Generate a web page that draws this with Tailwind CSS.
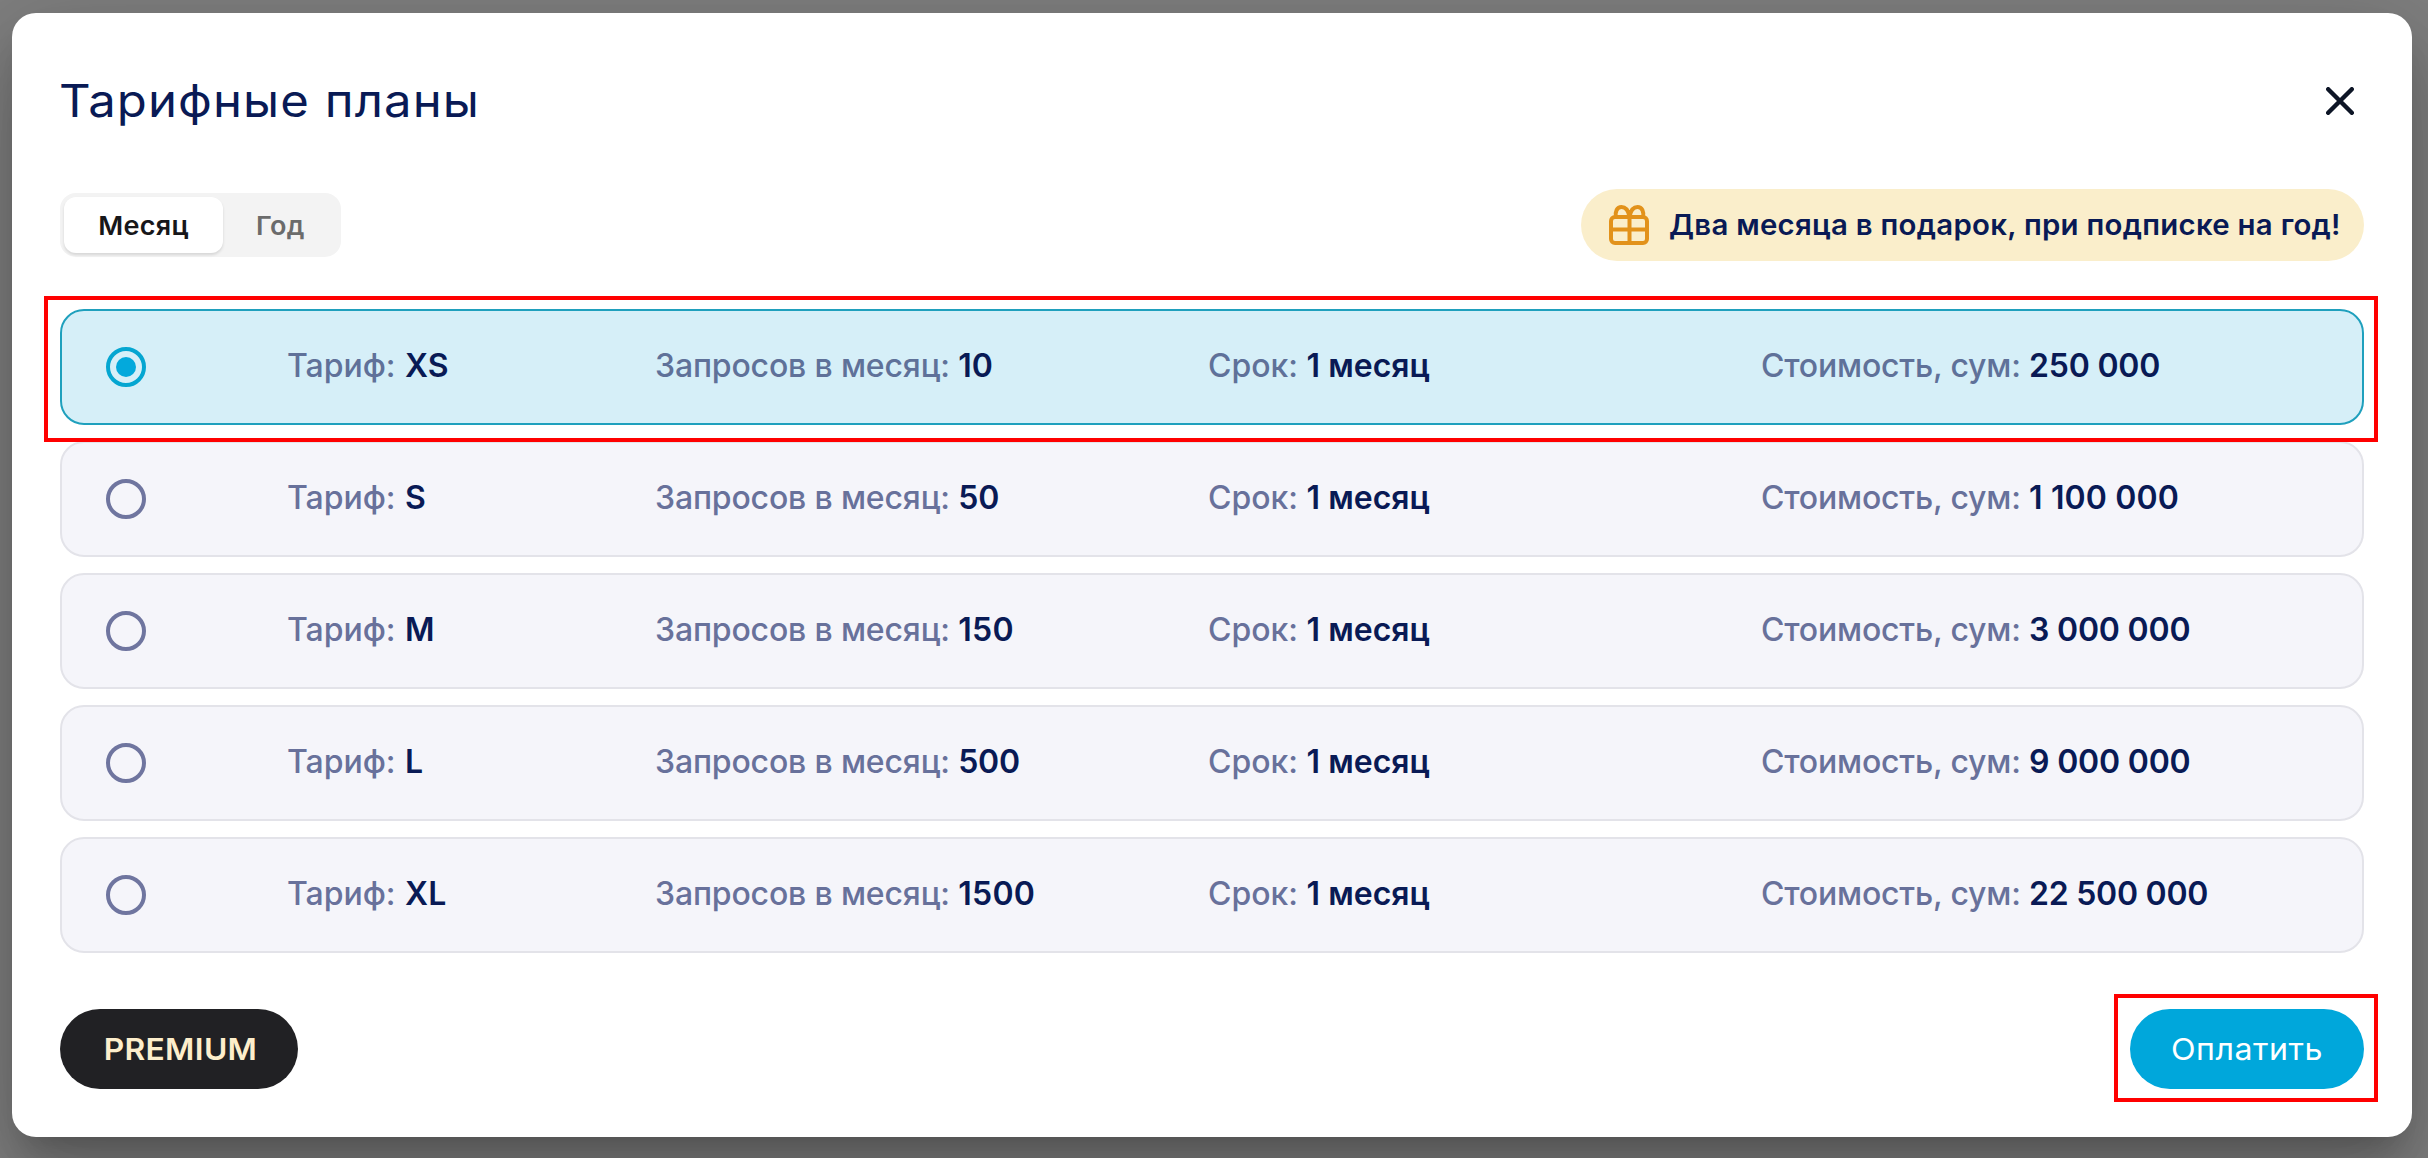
<!DOCTYPE html>
<html lang="ru">
<head>
  <meta charset="UTF-8" />
  <meta name="viewport" content="width=device-width, initial-scale=1" />
  <title>Тарифные планы</title>
  <script src="https://cdn.jsdelivr.net/npm/@tailwindcss/browser@4"></script>
</head>
<body class="bg-[#7f7f7f] font-['Inter',sans-serif] text-[#091a55] w-[2428px] h-[1158px] overflow-hidden pl-3 pt-[13px]">

<div role="dialog" class="w-[2400px] h-[1124px] bg-white rounded-3xl p-12 flex flex-col shadow-[0_22px_30px_-14px_rgba(0,0,0,0.2),0_48px_76px_6px_rgba(0,0,0,0.14),0_18px_92px_16px_rgba(0,0,0,0.12)]">

  <header class="h-20 flex items-center justify-between">
    <h1 class="text-[45px] leading-none font-normal tracking-[1px] -ml-px pb-px origin-left scale-x-[1.09]">Тарифные планы</h1>
    <button class="w-12 h-12 flex items-center justify-center" aria-label="Закрыть">
      <svg viewBox="0 0 28 28" class="w-7 h-7 text-[#0d1526]" fill="none" stroke="currentColor" stroke-width="4.400" stroke-linecap="round"><path d="M2.200 2.200 25.800 25.800M25.800 2.200 2.200 25.800"/></svg>
    </button>
  </header>

  <div class="mt-12 h-[72px] flex items-center justify-between">
    <div class="h-16 w-[281px] p-1 flex rounded-2xl bg-[#f3f3f3] text-[26px] tracking-[0.3px]">
      <button class="w-[159px] rounded-xl bg-white font-semibold text-[#17171a] shadow-[0_2px_3px_rgba(0,0,0,0.12)]"><span class="inline-block scale-x-[1.04]">Месяц</span></button>
      <button class="flex-1 font-semibold text-[#6b6b6b]"><span class="inline-block scale-x-[1.04]">Год</span></button>
    </div>

    <div class="h-[72px] w-[783px] pl-7 rounded-full bg-[#faeecb] flex items-center gap-5">
      <svg viewBox="0 0 40 40" class="w-10 h-10 shrink-0 text-[#e2921b]" fill="none" stroke="currentColor" stroke-width="4" aria-hidden="true">
        <rect x="2" y="12" width="36" height="26" rx="4"/>
        <path d="M2 24.500H38M20.500 10V38"/>
        <path d="M7 12.500C5.800 6.500 8 2 12.500 2 17 2 19.500 6.500 20.500 11.500 21.500 6.500 24 2 28.500 2 33 2 35.200 6.500 34 12.500"/>
      </svg>
      <span class="text-[28px] font-semibold tracking-[0.25px] whitespace-nowrap origin-left scale-x-[1.05]">Два месяца в подарок, при подписке на год!</span>
    </div>
  </div>

  <section class="mt-12 flex flex-col gap-4 text-[32px] leading-10 font-medium text-[#68719b] whitespace-nowrap">
    <div class="relative">
      <div class="h-[116px] grid grid-cols-[181px_368px_553px_553px_1fr] items-center pl-11 rounded-3xl border-2 border-[#1fa0bd] bg-[#d6eff8] text-[#5f7199]">
        <span class="w-10 h-10 rounded-full border-4 border-[#05a6d1] flex items-center justify-center"><span class="w-5 h-5 rounded-full bg-[#03a9dc]"></span></span>
        <p class="pb-0.5">Тариф: <b class="ml-px font-semibold text-[#091a55]">XS</b></p>
        <p class="pb-0.5 tracking-[-0.16px]">Запросов в месяц: <b class="font-semibold text-[#091a55] tracking-normal">10</b></p>
        <p class="pb-0.5">Срок: <b class="font-semibold text-[#091a55]">1 месяц</b></p>
        <p class="pb-0.5 tracking-[-0.2px]">Стоимость, сум: <b class="font-semibold text-[#091a55]">250 000</b></p>
      </div>
      <div class="absolute z-10 -left-4 -right-3.5 -top-[13px] -bottom-[17px] border-4 border-[#ff0000] pointer-events-none"></div>
    </div>

    <div class="h-[116px] grid grid-cols-[181px_368px_553px_553px_1fr] items-center pl-11 rounded-3xl border-2 border-[#e3e3e9] bg-[#f5f5fa]">
      <span class="w-10 h-10 rounded-full border-4 border-[#6f759f]"></span>
      <p class="pb-0.5">Тариф: <b class="ml-px font-semibold text-[#091a55]">S</b></p>
      <p class="pb-0.5 tracking-[-0.16px]">Запросов в месяц: <b class="font-semibold text-[#091a55] tracking-normal">50</b></p>
      <p class="pb-0.5">Срок: <b class="font-semibold text-[#091a55]">1 месяц</b></p>
      <p class="pb-0.5 tracking-[-0.2px]">Стоимость, сум: <b class="font-semibold text-[#091a55] tracking-[0.15px]">1 100 000</b></p>
    </div>

    <div class="h-[116px] grid grid-cols-[181px_368px_553px_553px_1fr] items-center pl-11 rounded-3xl border-2 border-[#e3e3e9] bg-[#f5f5fa]">
      <span class="w-10 h-10 rounded-full border-4 border-[#6f759f]"></span>
      <p class="pb-0.5">Тариф: <b class="ml-px font-semibold text-[#091a55]">M</b></p>
      <p class="pb-0.5 tracking-[-0.16px]">Запросов в месяц: <b class="font-semibold text-[#091a55] tracking-[0.3px]">150</b></p>
      <p class="pb-0.5">Срок: <b class="font-semibold text-[#091a55]">1 месяц</b></p>
      <p class="pb-0.5 tracking-[-0.2px]">Стоимость, сум: <b class="font-semibold text-[#091a55]">3 000 000</b></p>
    </div>

    <div class="h-[116px] grid grid-cols-[181px_368px_553px_553px_1fr] items-center pl-11 rounded-3xl border-2 border-[#e3e3e9] bg-[#f5f5fa]">
      <span class="w-10 h-10 rounded-full border-4 border-[#6f759f]"></span>
      <p class="pb-0.5">Тариф: <b class="ml-px font-semibold text-[#091a55]">L</b></p>
      <p class="pb-0.5 tracking-[-0.16px]">Запросов в месяц: <b class="font-semibold text-[#091a55]">500</b></p>
      <p class="pb-0.5">Срок: <b class="font-semibold text-[#091a55]">1 месяц</b></p>
      <p class="pb-0.5 tracking-[-0.2px]">Стоимость, сум: <b class="font-semibold text-[#091a55]">9 000 000</b></p>
    </div>

    <div class="h-[116px] grid grid-cols-[181px_368px_553px_553px_1fr] items-center pl-11 rounded-3xl border-2 border-[#e3e3e9] bg-[#f5f5fa]">
      <span class="w-10 h-10 rounded-full border-4 border-[#6f759f]"></span>
      <p class="pb-0.5">Тариф: <b class="ml-px font-semibold text-[#091a55]">XL</b></p>
      <p class="pb-0.5 tracking-[-0.16px]">Запросов в месяц: <b class="font-semibold text-[#091a55] tracking-[0.3px]">1500</b></p>
      <p class="pb-0.5">Срок: <b class="font-semibold text-[#091a55]">1 месяц</b></p>
      <p class="pb-0.5 tracking-[-0.2px]">Стоимость, сум: <b class="font-semibold text-[#091a55] tracking-[-0.25px]">22 500 000</b></p>
    </div>
  </section>

  <footer class="mt-14 flex justify-between text-[30px]">
    <button class="w-[238px] h-20 pl-0.5 rounded-full bg-[#212124] text-[#fdeecb] font-semibold tracking-[0.3px]"><span class="inline-block scale-x-[1.06]">PREMIUM</span></button>
    <div class="relative">
      <button class="w-[234px] h-20 rounded-full bg-[#00a7db] text-white font-normal tracking-[0.5px]"><span class="inline-block scale-x-[1.07]">Оплатить</span></button>
      <div class="absolute -left-4 -right-3.5 -top-[15px] -bottom-[13px] border-4 border-[#ff0000] pointer-events-none"></div>
    </div>
  </footer>
</div>

</body>
</html>
